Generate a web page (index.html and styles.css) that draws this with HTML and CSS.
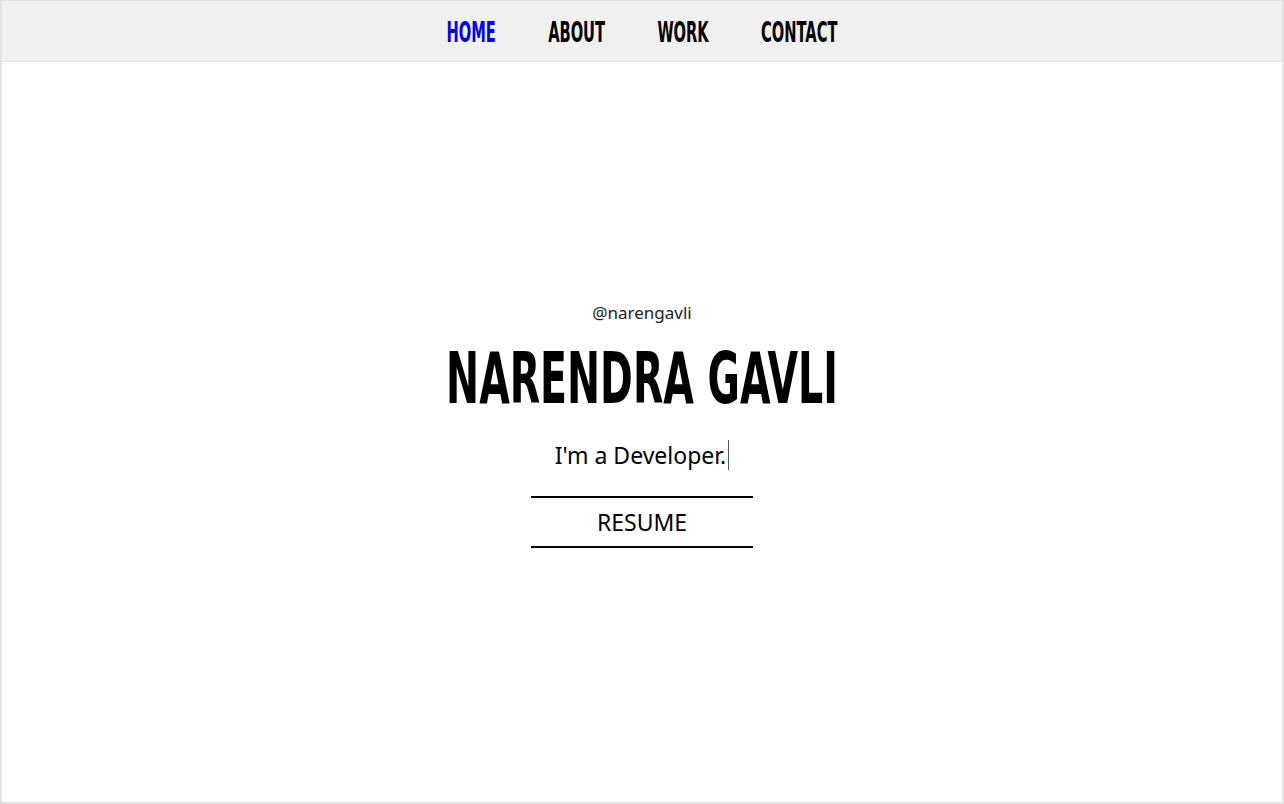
FILE: index.html
```html
<!DOCTYPE html>
<html>
<head>
<meta charset="utf-8">
<link rel="stylesheet" href="styles.css">
</head>
<body>
<div class="page">
  <nav class="nav">
    <div class="nav-inner">
      <a class="nav-link active">HOME</a>
      <a class="nav-link">ABOUT</a>
      <a class="nav-link">WORK</a>
      <a class="nav-link">CONTACT</a>
    </div>
  </nav>
  <main class="hero">
    <div class="handle">@narengavli</div>
    <h1 class="name"><span class="squeeze">NARENDRA GAVLI</span></h1>
    <div class="tagline">I'm a Developer.<span class="cursor"></span></div>
    <a class="resume">RESUME</a>
  </main>
</div>
</body>
</html>
```
FILE: styles.css
```css
html, body { margin: 0; padding: 0; background: #fff; }
.page {
  width: 1284px; height: 804px; box-sizing: border-box;
  border: 2px solid #e3e3e3; border-top: 1px solid #e3e3e3;
  display: flex; flex-direction: column;
}
.nav {
  height: 60px; background: #f0f0f0; border-bottom: 1px solid #e8e8e8;
  display: flex; justify-content: center; align-items: center;
}
.nav-inner {
  display: flex; gap: 90px; transform: scaleX(0.582); padding-top: 2px;
}
.nav-link {
  font-family: "DejaVu Sans Condensed", sans-serif; font-weight: 700;
  font-size: 28px; color: #000;
}
.nav-link.active { color: #0000ee; }
.hero {
  flex: 1; display: flex; flex-direction: column; align-items: center;
  padding-top: 241px;
}
.handle { font-family: "Noto Sans", sans-serif; font-size: 17px; color: #222; line-height: 20px; }
.name { margin: 20px 0 0; line-height: 71px; font-weight: 700;
  font-family: "DejaVu Sans Condensed", sans-serif; font-size: 71px; }
.squeeze { display: inline-block; transform: scaleX(0.618); }
.tagline { font-family: "Noto Sans", sans-serif; font-size: 23px; margin-top: 26px; line-height: 30px; display: flex; align-items: center; }
.cursor { display: inline-block; width: 1px; height: 30px; background: #555; margin-left: 2px; }
.resume {
  margin-top: 26px; width: 222px; box-sizing: border-box; height: 52px;
  border-top: 2px solid #000; border-bottom: 2px solid #000;
  display: flex; align-items: center; justify-content: center;
  font-family: "Noto Sans", sans-serif; font-size: 23px; color: #000;
}
```
